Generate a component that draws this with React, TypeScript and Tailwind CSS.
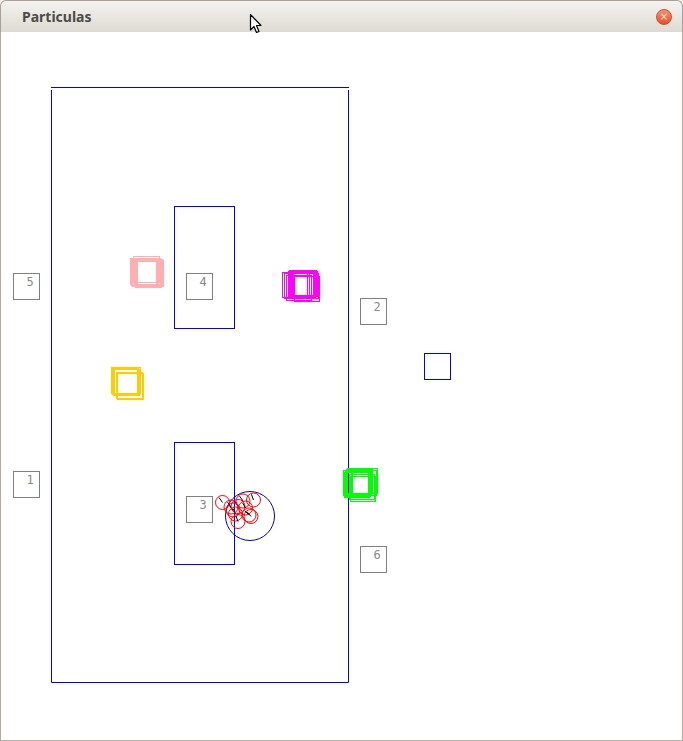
import React from "react";

type Sq = [number, number];

const blue = "#0000ff";
const grey = "#808080";

// x1,y1,x2,y2 are the pixel columns/rows the lines sit on
function Box({ x1, y1, x2, y2, color }: { x1: number; y1: number; x2: number; y2: number; color: string }) {
    return <rect x={x1 + 0.5} y={y1 + 0.5} width={x2 - x1} height={y2 - y1} fill="none" stroke={color} strokeWidth={1} />;
}

function Label({ x, y, n }: { x: number; y: number; n: string }) {
    return (
        <g>
            <Box x1={x} y1={y} x2={x + 26} y2={y + 26} color={grey} />
            <text x={x + 13.5} y={y + 13} fill="#8a8a8a" fontSize={12} fontFamily="'DejaVu Sans Mono', monospace">
                {n}
            </text>
        </g>
    );
}

function Swarm({ color, at, size = 26 }: { color: string; at: Sq[]; size?: number }) {
    return (
        <g>
            {at.map(([x, y], i) => (
                <Box key={i} x1={x} y1={y} x2={x + size} y2={y + size} color={color} />
            ))}
        </g>
    );
}

const pink: Sq[] = [[130, 258], [131, 259], [132, 260], [133, 256], [134, 258], [135, 261], [136, 259], [137, 260]];
const magenta: Sq[] = [[282, 272], [284, 273], [286, 275], [288, 271], [289, 270], [290, 272], [291, 270], [292, 271], [293, 273], [294, 276]];
const yellow: Sq[] = [[111, 367], [112, 368], [113, 369], [114, 367], [116, 372], [117, 373]];
const green: Sq[] = [[343, 470], [344, 472], [345, 471], [346, 469], [347, 468], [349, 474], [350, 476], [351, 470], [352, 468]];

// center x, center y, direction angle (deg)
const dots: [number, number, number][] = [
    [222.5, 502.5, 235],
    [253.5, 500, 250],
    [243, 501, 235],
    [238, 506.5, 240],
    [233, 510, 230],
    [235.5, 514, 245],
    [249, 515, 225],
    [251, 516.5, 230],
    [238, 521.5, 250],
    [245.5, 508, 240],
    [231, 507, 235],
];

function Cursor() {
    return (
        <svg className="absolute left-[249px] top-[13px]" width="14" height="22" viewBox="0 0 14 22">
            <path d="M1.5 1.5 L1.5 17 L5 13.5 L7.5 19.5 L10 18.5 L7.5 12.5 L12 12.5 Z" fill="#ffffff" stroke="#000000" strokeWidth="1.2" strokeLinejoin="round" />
        </svg>
    );
}

export default function App() {
    return (
        <div className="relative flex h-[741px] w-[683px] flex-col bg-[#f2f1f0]">
            {/* TITLE BAR */}
            <div className="flex h-[32px] items-center justify-between rounded-t-[6px] border border-b-0 border-[#aaa194] bg-gradient-to-b from-[#f4f3f1] to-[#dedad3] pl-[21px] pr-[10px]">
                <span className="font-['Noto_Sans',sans-serif] text-[14px] font-bold text-[#4d4b48]">Particulas</span>
                <span className="flex h-[16px] w-[16px] items-center justify-center rounded-full border border-[#c8502e] bg-gradient-to-b from-[#f7916a] to-[#e2532b] font-['DejaVu_Sans',sans-serif] text-[10px] leading-none text-[#fde6dc]">
                    ×
                </span>
            </div>

            {/* CANVAS */}
            <div className="flex-1 border-x border-b border-[#b6ad9f] bg-white">
                <svg width="681" height="708" viewBox="1 32 681 708" className="block">
                    <line x1={51} y1={87.5} x2={349} y2={87.5} stroke={blue} />
                    <path d="M51.5 90 L51.5 682.5 L348.5 682.5 L348.5 90" fill="none" stroke={blue} />
                    <Box x1={174} y1={206} x2={234} y2={328} color={blue} />
                    <Box x1={174} y1={442} x2={234} y2={564} color={blue} />
                    <Box x1={424} y1={353} x2={450} y2={379} color={blue} />

                    <Label x={13} y={273} n="5" />
                    <Label x={186} y={273} n="4" />
                    <Label x={360} y={298} n="2" />
                    <Label x={13} y={471} n="1" />
                    <Label x={186} y={496} n="3" />
                    <Label x={360} y={546} n="6" />

                    <Swarm color="#ffafaf" at={pink} />
                    <Swarm color="#ff00ff" at={magenta} size={25} />
                    <Swarm color="#ffcc00" at={yellow} />
                    <Swarm color="#00ff00" at={green} size={25} />

                    <circle cx={250} cy={516} r={24.5} fill="none" stroke="#0000c8" />
                    {dots.map(([cx, cy, a], i) => {
                        const r = (a * Math.PI) / 180;
                        return (
                            <g key={i}>
                                <circle cx={cx} cy={cy} r={7} fill="none" stroke="#ff0000" />
                                <line x1={cx} y1={cy} x2={cx + 6 * Math.cos(r)} y2={cy + 6 * Math.sin(r)} stroke="#000000" />
                            </g>
                        );
                    })}
                </svg>
            </div>

            <Cursor />
        </div>
    );
}
